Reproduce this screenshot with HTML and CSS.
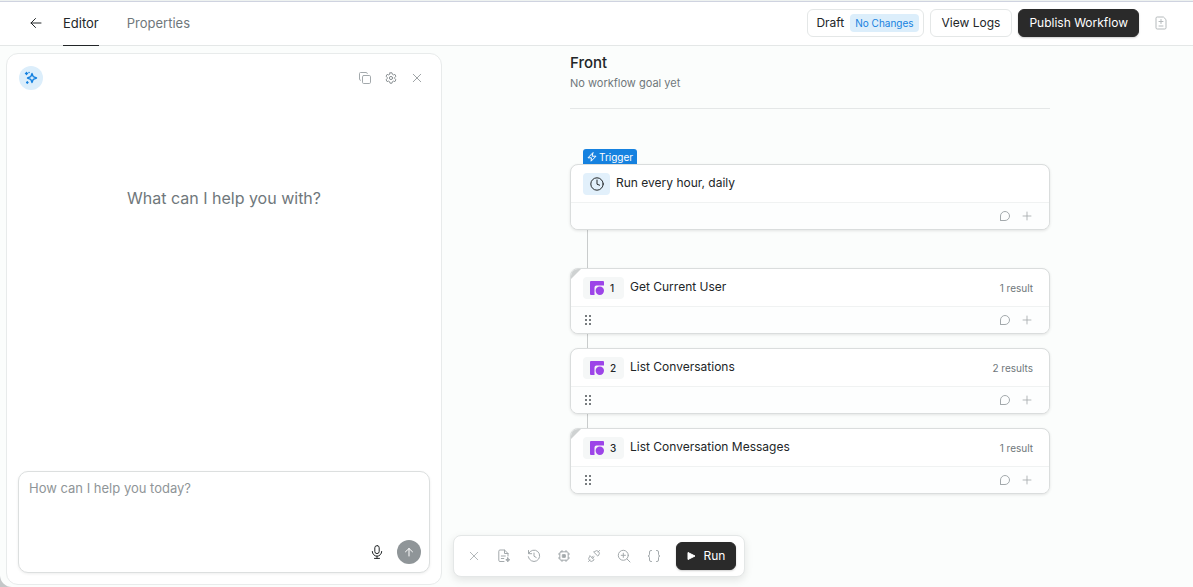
FILE: index.html
```html
<!DOCTYPE html>
<html lang="en">
<head>
<meta charset="utf-8">
<meta name="viewport" content="width=device-width, initial-scale=1">
<title>Front – Workflow Editor</title>
<link rel="stylesheet" href="styles.css">
</head>
<body>
<svg class="sprite" aria-hidden="true">
  <symbol id="i-chat" viewBox="0 0 24 24"><path d="M3 20.500V12a9 9 0 1 1 9 9H3.500a.5.5 0 0 1-.5-.5z"/></symbol>
  <symbol id="i-plus" viewBox="0 0 24 24"><path d="M12 2.500v19M2.500 12h19"/></symbol>
  <symbol id="i-x" viewBox="0 0 24 24"><path d="M3 3l18 18M21 3L3 21"/></symbol>
  <symbol id="i-grip" viewBox="0 0 8 12"><g fill="#4a5054" stroke="none"><circle cx="2" cy="2" r="1"/><circle cx="6" cy="2" r="1"/><circle cx="2" cy="6" r="1"/><circle cx="6" cy="6" r="1"/><circle cx="2" cy="10" r="1"/><circle cx="6" cy="10" r="1"/></g></symbol>
  <symbol id="i-front" viewBox="0 0 14 14"><path d="M1 0h12a1 1 0 0 1 1 1v3.500H6.500a2 2 0 0 0-2 2V14H1a1 1 0 0 1-1-1V1a1 1 0 0 1 1-1z" fill="#9d45e8" stroke="none"/><circle cx="9.800" cy="9.800" r="4.200" fill="#9d45e8" stroke="none"/></symbol>
</svg>
<div class="app">
  <header class="topbar">
    <button class="icon-btn back" aria-label="Back"><svg class="icon i12" viewBox="0 0 12 12"><path d="M11 6H1M5.500 1.500L1 6l4.500 4.500"/></svg></button>
    <nav class="tabs">
      <a class="tab tab-active" href="#editor">Editor</a>
      <a class="tab" href="#properties">Properties</a>
    </nav>
    <div class="actions">
      <button class="btn btn-draft">Draft <span class="pill">No Changes</span></button>
      <button class="btn btn-logs">View Logs</button>
      <button class="btn btn-dark btn-publish">Publish Workflow</button>
      <button class="icon-btn notes" aria-label="Changes"><svg class="icon i14" viewBox="0 0 14 14"><path d="M9 1H3.200A1.200 1.200 0 0 0 2 2.200v9.600A1.200 1.200 0 0 0 3.200 13h7.600a1.200 1.200 0 0 0 1.200-1.200V4zM7 3.500v4M5 5.500h4M5 10h4"/></svg></button>
    </div>
  </header>
  <div class="workspace">
    <aside class="panel">
      <div class="panel-head">
        <span class="spark"><svg class="icon i14 bold" viewBox="0 0 14 14"><path d="M8 2.500L9.300 5.700 12.500 7 9.300 8.300 8 11.500 6.700 8.300 3.500 7 6.700 5.700z"/><path d="M2.500 1.500v2M1.500 2.500h2M3.300 10.800v1.400M2.600 11.500h1.400M5 1.500h.1"/></svg></span>
        <div class="panel-tools">
          <button class="icon-btn" aria-label="Copy"><svg class="icon i12" viewBox="0 0 12 12"><rect x="3.500" y="3.500" width="8" height="8" rx="1.200"/><path d="M1.500 8.300a1 1 0 0 1-1-1V1.500a1 1 0 0 1 1-1h5.800a1 1 0 0 1 1 1"/></svg></button>
          <button class="icon-btn dark" aria-label="Settings"><svg class="icon i12" viewBox="0 0 12 12"><path d="M5 .8h2l.4 1.500 1 .6 1.500-.5 1 1.800-1.100 1.100v1.400l1.100 1.100-1 1.800-1.500-.5-1 .6L7 11.200H5l-.4-1.500-1-.6-1.500.5-1-1.800 1.100-1.100V5.300L1.100 4.200l1-1.800 1.500.5 1-.6z"/><circle cx="6" cy="6" r="1.600"/></svg></button>
          <button class="icon-btn dark" aria-label="Close"><svg class="icon i10 thick"><use href="#i-x"/></svg></button>
        </div>
      </div>
      <p class="prompt">What can I help you with?</p>
      <form class="composer">
        <textarea class="composer-input" aria-label="Message" placeholder="How can I help you today?"></textarea>
        <div class="composer-tools">
          <button type="button" class="icon-btn mic" aria-label="Dictate"><svg class="icon i14" viewBox="0 0 14 14"><rect x="4.800" y=".6" width="4.400" height="8" rx="2.200"/><path d="M2.300 6.500a4.700 4.700 0 0 0 9.400 0M7 11.200v2.300M4.500 13.400h5"/></svg></button>
          <button type="button" class="send" aria-label="Send"><svg class="icon i10" viewBox="0 0 10 10"><path d="M5 9V1.500M1.500 4.800L5 1.500l3.500 3.300"/></svg></button>
        </div>
      </form>
    </aside>
    <main class="canvas">
      <div class="flow">
        <div class="flow-head">
          <h1 class="flow-title">Front</h1>
          <p class="flow-goal">No workflow goal yet</p>
        </div>
        <span class="trigger-tag"><svg class="icon i10" viewBox="0 0 10 10"><path d="M5.800.8L1 5.800h3.400l-.3 3.400L9 4.200H5.500z"/></svg>Trigger</span>
        <section class="card">
          <div class="card-main"><span class="chip chip-blue"><svg class="icon i14" viewBox="0 0 14 14"><circle cx="7" cy="7" r="6.200"/><path d="M7 3v4.200l2.600 1"/></svg></span><span class="card-name">Run every hour, daily</span></div>
          <div class="card-foot"><button class="icon-btn end" aria-label="Comment"><svg class="icon i12 thick"><use href="#i-chat"/></svg></button><button class="icon-btn" aria-label="Add"><svg class="icon i10 thick"><use href="#i-plus"/></svg></button></div>
        </section>
        <div class="link link-long"></div>
        <section class="card folded">
          <div class="card-main"><span class="chip chip-step"><svg class="i14"><use href="#i-front"/></svg>1</span><span class="card-name">Get Current User</span><span class="result">1 result</span></div>
          <div class="card-foot"><button class="icon-btn grip" aria-label="Drag"><svg class="dots"><use href="#i-grip"/></svg></button><button class="icon-btn end" aria-label="Comment"><svg class="icon i12 thick"><use href="#i-chat"/></svg></button><button class="icon-btn" aria-label="Add"><svg class="icon i10 thick"><use href="#i-plus"/></svg></button></div>
        </section>
        <div class="link"></div>
        <section class="card">
          <div class="card-main"><span class="chip chip-step"><svg class="i14"><use href="#i-front"/></svg>2</span><span class="card-name">List Conversations</span><span class="result">2 results</span></div>
          <div class="card-foot"><button class="icon-btn grip" aria-label="Drag"><svg class="dots"><use href="#i-grip"/></svg></button><button class="icon-btn end" aria-label="Comment"><svg class="icon i12 thick"><use href="#i-chat"/></svg></button><button class="icon-btn" aria-label="Add"><svg class="icon i10 thick"><use href="#i-plus"/></svg></button></div>
        </section>
        <div class="link"></div>
        <section class="card folded">
          <div class="card-main"><span class="chip chip-step"><svg class="i14"><use href="#i-front"/></svg>3</span><span class="card-name">List Conversation Messages</span><span class="result">1 result</span></div>
          <div class="card-foot"><button class="icon-btn grip" aria-label="Drag"><svg class="dots"><use href="#i-grip"/></svg></button><button class="icon-btn end" aria-label="Comment"><svg class="icon i12 thick"><use href="#i-chat"/></svg></button><button class="icon-btn" aria-label="Add"><svg class="icon i10 thick"><use href="#i-plus"/></svg></button></div>
        </section>
      </div>
      <div class="toolbar">
        <button class="icon-btn tool" aria-label="Close"><svg class="icon i10 thick"><use href="#i-x"/></svg></button>
        <button class="icon-btn tool" aria-label="Notes"><svg class="icon i14" viewBox="0 0 14 14"><path d="M7 12.500H3A1.200 1.200 0 0 1 1.800 11.300V2.200A1.200 1.200 0 0 1 3 1h4.500L11 4.500V7M7.500 1v3.500H11M4.300 7h4M4.300 9.500h2.500"/><path d="M10.800 8.800l.6 1.400 1.400.6-1.400.6-.6 1.400-.6-1.400-1.400-.6 1.400-.6z" fill="currentColor"/></svg></button>
        <button class="icon-btn tool" aria-label="History"><svg class="icon i14" viewBox="0 0 14 14"><path d="M1.500 1.500v3.200h3.200M1.700 4.500A5.700 5.700 0 1 1 1.300 7.700M7 4v3.200l2.200 1.300"/></svg></button>
        <button class="icon-btn tool" aria-label="Model"><svg class="icon i14" viewBox="0 0 14 14"><rect x="2.800" y="2.800" width="8.400" height="8.400" rx="1.200"/><rect x="5.700" y="5.700" width="2.600" height="2.600" fill="currentColor"/><path d="M5 1.500v1.300M9 1.500v1.300M5 11.200v1.300M9 11.200v1.300M1.500 5h1.300M1.500 9h1.300M11.200 5h1.300M11.200 9h1.300"/></svg></button>
        <button class="icon-btn tool" aria-label="Integrations"><svg class="icon i14" viewBox="0 0 14 14"><path d="M1.500 12.500l1.500-1.500M11 3l1.500-1.500M3.200 6.900l3.900 3.900-1 .9a2.700 2.700 0 0 1-3.800-3.800zM4.800 8.500L6.200 7.100M5.600 9.300L7 7.900M6.900 3.200l3.900 3.900.9-1a2.700 2.700 0 0 0-3.800-3.800z"/></svg></button>
        <button class="icon-btn tool" aria-label="Zoom in"><svg class="icon i14" viewBox="0 0 14 14"><circle cx="6.300" cy="6.300" r="5"/><path d="M10 10l3 3M6.300 4.200v4.200M4.200 6.300h4.200"/></svg></button>
        <button class="icon-btn tool" aria-label="Variables"><svg class="icon i14" viewBox="0 0 14 14"><path d="M4.500 1.500H4A1.500 1.500 0 0 0 2.500 3v2.300Q2.500 7 1 7q1.500 0 1.500 1.700V11A1.500 1.500 0 0 0 4 12.500h.5M9.500 1.500h.5A1.500 1.500 0 0 1 11.500 3v2.300Q11.500 7 13 7q-1.500 0-1.500 1.700V11a1.500 1.500 0 0 1-1.500 1.500h-.5"/></svg></button>
        <button class="btn btn-dark btn-run"><svg class="play" viewBox="0 0 9 10"><path d="M1 1.500L8 5 1 8.500z" fill="#fff" stroke="#fff" stroke-linejoin="round"/></svg>Run</button>
      </div>
    </main>
  </div>
</div>
</body>
</html>
```

FILE: styles.css
```css
* { box-sizing: border-box; }
html { background: #c4c7c8; }
body {
  margin: 0;
  font-family: Inter, "Liberation Sans", sans-serif;
  font-size: 12px;
  line-height: 16px;
  color: #222628;
}
h1, p { margin: 0; }
button { font: inherit; color: inherit; }
.sprite { position: absolute; width: 0; height: 0; }

.app {
  min-height: 100vh;
  display: flex;
  flex-direction: column;
  background: #fbfdfc;
  border-top: 1px solid #eef2f0;
  border-bottom-left-radius: 12px;
}
.icon { display: block; fill: none; stroke: currentColor; stroke-width: 1; stroke-linecap: round; stroke-linejoin: round; }
.thick { stroke-width: 2; }
.bold { stroke-width: 1.4; }
.i10 { width: 10px; height: 10px; }
.i12 { width: 12px; height: 12px; }
.i14 { width: 14px; height: 14px; }
.icon-btn {
  display: flex;
  align-items: center;
  justify-content: center;
  padding: 0;
  border: 0;
  background: none;
  color: #a3a9ac;
}
.dark { color: #8b9194; }

/* Top bar */
.topbar {
  display: flex;
  align-items: stretch;
  height: 45px;
  padding: 0 25px 0 28px;
  background: #fff;
  border-top: 1px solid #cfd3e0;
  border-bottom: 1px solid #e4e7e7;
}
.back { width: 16px; padding-bottom: 2px; color: #222628; }
.tabs { display: flex; gap: 28px; margin-left: 19px; }
.tab {
  display: flex;
  align-items: center;
  margin-bottom: -1px;
  padding-bottom: 2px;
  border-bottom: 1px solid transparent;
  color: #6f777b;
  font-size: 13px;
  text-decoration: none;
}
.tab-active { color: #222628; border-color: #222628; }
.actions { display: flex; align-items: center; gap: 6px; margin-left: auto; padding-bottom: 2px; }
.btn {
  display: flex;
  align-items: center;
  justify-content: center;
  height: 28px;
  padding: 0 11px;
  border: 1px solid #e4e7e7;
  border-radius: 6px;
  background: #fff;
  white-space: nowrap;
}
.btn-draft { gap: 6px; padding: 0 4px 0 8px; }
.btn-dark {
  border-color: #2a2a2a;
  background: #2a2a2a;
  color: #fff;
  box-shadow: 0 1px 2px rgba(0, 0, 0, .2);
}
.btn-publish { padding: 0 10px; }
.pill {
  height: 18px;
  padding: 0 5px;
  border-radius: 4px;
  background: #dceefb;
  color: #1682e0;
  font-size: 10px;
  line-height: 18px;
}
.notes { margin-left: 9px; color: #b5babc; }

/* Assistant panel */
.workspace {
  flex: 1;
  display: grid;
  grid-template-columns: minmax(320px, 442px) minmax(0, 1fr);
}
.panel {
  display: flex;
  flex-direction: column;
  margin: 7px 0 2px 6px;
  padding: 11px;
  border: 1px solid #e8ebeb;
  border-radius: 12px;
  background: #fff;
}
.panel-head { display: flex; align-items: center; justify-content: space-between; height: 26px; padding: 0 5px 0 1px; }
.spark {
  display: grid;
  place-items: center;
  width: 24px;
  height: 24px;
  border-radius: 50%;
  background: #dceefb;
  color: #1682e0;
}
.panel-tools { display: flex; gap: 10px; }
.panel-tools .icon-btn { width: 16px; height: 16px; }
.prompt { margin-top: 95px; color: #6f777b; font-size: 16px; line-height: 24px; text-align: center; }
.composer {
  display: flex;
  flex-direction: column;
  height: 102px;
  margin-top: auto;
  padding: 8px;
  border: 1px solid #dcdfdf;
  border-radius: 10px;
  background: #fff;
  box-shadow: 0 1px 3px rgba(0, 0, 0, .07);
}
.composer-input {
  flex: 1;
  min-height: 0;
  padding: 0 2px;
  border: 0;
  outline: 0;
  resize: none;
  background: none;
  font: 13px/16px Inter, "Liberation Sans", sans-serif;
  color: #222628;
}
.composer-input::placeholder { color: #8f9598; opacity: 1; }
.composer-tools { display: flex; justify-content: flex-end; align-items: center; gap: 12px; }
.mic { width: 16px; color: #222628; }
.send {
  display: grid;
  place-items: center;
  width: 24px;
  height: 24px;
  padding: 0;
  border: 0;
  border-radius: 50%;
  background: #8f9598;
  color: #fff;
}

/* Workflow canvas */
.canvas { position: relative; padding: 7px 15px 92px 0; }
.flow { width: 100%; max-width: 480px; margin: 0 auto; }
.flow-head { height: 56px; border-bottom: 1px solid #e4e7e7; }
.flow-title { font-size: 15px; font-weight: 500; line-height: 20px; }
.flow-goal { padding-top: 2px; color: #6f777b; font-size: 11px; }
.trigger-tag {
  display: flex;
  align-items: center;
  gap: 2px;
  width: fit-content;
  height: 15px;
  margin: 40px 0 0 13px;
  padding: 0 4px;
  border-radius: 3px 3px 0 0;
  background: #1682e0;
  color: #fff;
  font-size: 10px;
}
.card {
  position: relative;
  overflow: hidden;
  border: 1px solid #dadddd;
  border-radius: 8px;
  background: #fff;
  box-shadow: 0 1px 3px rgba(0, 0, 0, .1);
}
.folded::before {
  content: "";
  position: absolute;
  top: 0;
  left: 0;
  width: 10px;
  height: 10px;
  background: #cfd2d2;
  clip-path: polygon(0 0, 100% 0, 0 100%);
}
.card-main { display: flex; align-items: center; height: 38px; padding: 0 16px 0 12px; border-bottom: 1px solid #f0f2f2; }
.card-name { padding-bottom: 2px; }
.card-foot { display: flex; align-items: center; gap: 10px; height: 26px; padding: 0 16px 0 13px; background: #fdfefe; }
.card-foot .icon-btn { width: 12px; height: 16px; }
.card-foot .grip { width: 8px; }
.end { margin-left: auto; }
.dots { width: 8px; height: 12px; }
.chip {
  display: flex;
  align-items: center;
  gap: 6px;
  height: 22px;
  margin-right: 6px;
  padding: 0 6px 0 7px;
  border-radius: 4px;
  background: #f5f7f7;
  font-size: 10px;
  font-weight: 500;
}
.chip-step { min-width: 41px; }
.chip-blue { background: #e2f0fb; }
.result { margin-left: auto; color: #6f777b; font-size: 10px; }
.link { height: 14px; margin-left: 17px; border-left: 1px solid #c9cccc; }
.link-long { height: 38px; }

/* Floating toolbar */
.toolbar {
  position: absolute;
  left: 11px;
  bottom: 10px;
  display: flex;
  align-items: center;
  gap: 6px;
  height: 42px;
  padding: 0 8px;
  border: 1px solid #e4e7e7;
  border-radius: 8px;
  background: #fff;
  box-shadow: 0 3px 8px rgba(0, 0, 0, .1);
}
.tool { width: 24px; height: 24px; }
.btn-run { gap: 8px; width: 60px; margin-left: 4px; padding: 0; }
.play { width: 9px; height: 10px; }
```
